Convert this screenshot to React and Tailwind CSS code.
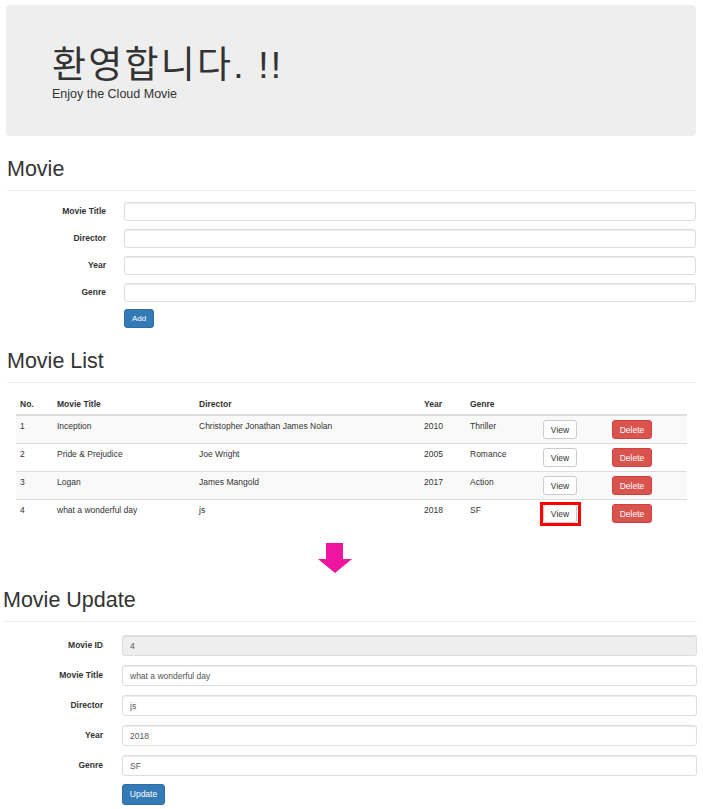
import React from 'react';

const movies = [
  { no: 1, title: 'Inception', director: 'Christopher Jonathan James Nolan', year: 2010, genre: 'Thriller' },
  { no: 2, title: 'Pride & Prejudice', director: 'Joe Wright', year: 2005, genre: 'Romance' },
  { no: 3, title: 'Logan', director: 'James Mangold', year: 2017, genre: 'Action' },
  { no: 4, title: 'what a wonderful day', director: 'js', year: 2018, genre: 'SF' },
];

function SectionTitle({ title, className, lineClass }) {
  return (
    <div className={className}>
      <h2 className="text-[21.5px] leading-[24px] font-normal text-[#333]">{title}</h2>
      <div className={`h-px bg-[#eee] ${lineClass}`} />
    </div>
  );
}

function AddRow({ label }) {
  return (
    <div className="flex items-center">
      <label className="w-[99px] text-right text-[8.5px] font-bold">{label}</label>
      <input
        type="text"
        className="ml-[18px] h-[19px] flex-1 rounded-[3px] border border-[#ddd] bg-white shadow-[inset_0_1px_1px_rgba(0,0,0,0.075)] outline-none"
      />
    </div>
  );
}

function UpdateRow({ label, value, disabled }) {
  return (
    <div className="flex items-center">
      <label className="w-[100px] text-right text-[8.5px] font-bold">{label}</label>
      <input
        type="text"
        defaultValue={value}
        disabled={disabled}
        className={`ml-[19px] h-[21px] flex-1 rounded-[3px] border border-[#ddd] px-[7px] text-[8.5px] text-[#555] shadow-[inset_0_1px_1px_rgba(0,0,0,0.075)] outline-none ${
          disabled ? 'bg-[#eee]' : 'bg-white'
        }`}
      />
    </div>
  );
}

function MovieTable() {
  return (
    <table className="ml-[16px] mt-[11px] w-[671px] table-fixed border-collapse text-[8.5px] leading-[12px]">
      <colgroup>
        <col className="w-[37px]" />
        <col className="w-[142px]" />
        <col className="w-[225px]" />
        <col className="w-[46px]" />
        <col className="w-[73px]" />
        <col className="w-[69px]" />
        <col className="w-[79px]" />
      </colgroup>
      <thead>
        <tr className="border-b-2 border-[#ddd] text-left">
          <th className="px-[4px] pt-[4px] pb-[4px] font-bold">No.</th>
          <th className="px-[4px] pt-[4px] pb-[4px] font-bold">Movie Title</th>
          <th className="px-[4px] pt-[4px] pb-[4px] font-bold">Director</th>
          <th className="px-[4px] pt-[4px] pb-[4px] font-bold">Year</th>
          <th className="px-[4px] pt-[4px] pb-[4px] font-bold">Genre</th>
          <th />
          <th />
        </tr>
      </thead>
      <tbody>
        {movies.map((m, i) => (
          <tr key={m.no} className={`${i > 0 ? 'border-t border-[#ddd]' : ''} ${i % 2 === 0 ? 'bg-[#f9f9f9]' : 'bg-white'}`}>
            <td className="h-[27px] px-[4px] pt-[4px] align-top">{m.no}</td>
            <td className="px-[4px] pt-[4px] align-top">{m.title}</td>
            <td className="px-[4px] pt-[4px] align-top">{m.director}</td>
            <td className="px-[4px] pt-[4px] align-top">{m.year}</td>
            <td className="px-[4px] pt-[4px] align-top">{m.genre}</td>
            <td className="px-[4px] pt-[4px] pb-[4px] align-top">
              <button className="relative block h-[19px] w-[34px] rounded-[3px] border border-[#ccc] bg-white text-[8.5px] text-[#333]">
                View
                {m.no === 4 && (
                  <span className="pointer-events-none absolute -left-[4px] -top-[3px] -right-[5px] -bottom-[4px] border-[3px] border-[#ff0000]" />
                )}
              </button>
            </td>
            <td className="px-[4px] pt-[4px] pb-[4px] align-top">
              <button className="block h-[19px] w-[40px] rounded-[3px] border border-[#d43f3a] bg-[#d9534f] text-[8.5px] text-white">
                Delete
              </button>
            </td>
          </tr>
        ))}
      </tbody>
    </table>
  );
}

export default function App() {
  return (
    <div className="min-h-[809px] w-[703px] bg-white font-['Liberation_Sans','Noto_Sans_CJK_KR',Arial,sans-serif] text-[#333]">
      <div className="ml-[6px] mr-[7px] pt-[5px]">
        <div className="h-[131px] rounded-[4px] bg-[#eee] pl-[46px] pt-[41px]">
          <h1 className="text-[37px] leading-[40px] tracking-[2.2px] font-normal">환영합니다. !!</h1>
          <p className="mt-[1px] text-[12.5px] leading-[15px]">Enjoy the Cloud Movie</p>
        </div>
      </div>

      <div className="px-[7px]">
        <SectionTitle title="Movie" className="mt-[21px]" lineClass="mt-[9px]" />
        <div className="mt-[11px] flex flex-col gap-[8px]">
          <AddRow label="Movie Title" />
          <AddRow label="Director" />
          <AddRow label="Year" />
          <AddRow label="Genre" />
        </div>
        <button className="ml-[117px] mt-[7px] h-[19px] w-[30px] rounded-[3px] border border-[#2e6da4] bg-[#337ab7] text-[8px] text-white">
          Add
        </button>
        <SectionTitle title="Movie List" className="mt-[21px]" lineClass="mt-[9px]" />
      </div>

      <MovieTable />

      <div className="ml-[318px] mt-[16px] h-[30px] w-[34px]">
        <svg width="34" height="30" viewBox="0 0 34 30">
          <polygon points="8,0 25,0 25,16 34,16 17,30 0,16 8,16" fill="#ee169e" />
        </svg>
      </div>

      <div className="pl-[3px] pr-[6px]">
        <SectionTitle title="Movie Update" className="mt-[15px]" lineClass="mt-[9px]" />
        <div className="mt-[13px] flex flex-col gap-[9px]">
          <UpdateRow label="Movie ID" value="4" disabled />
          <UpdateRow label="Movie Title" value="what a wonderful day" />
          <UpdateRow label="Director" value="js" />
          <UpdateRow label="Year" value="2018" />
          <UpdateRow label="Genre" value="SF" />
        </div>
        <button className="ml-[119px] mt-[8px] h-[21px] w-[43px] rounded-[3px] border border-[#2e6da4] bg-[#337ab7] text-[8.5px] text-white">
          Update
        </button>
      </div>
    </div>
  );
}
